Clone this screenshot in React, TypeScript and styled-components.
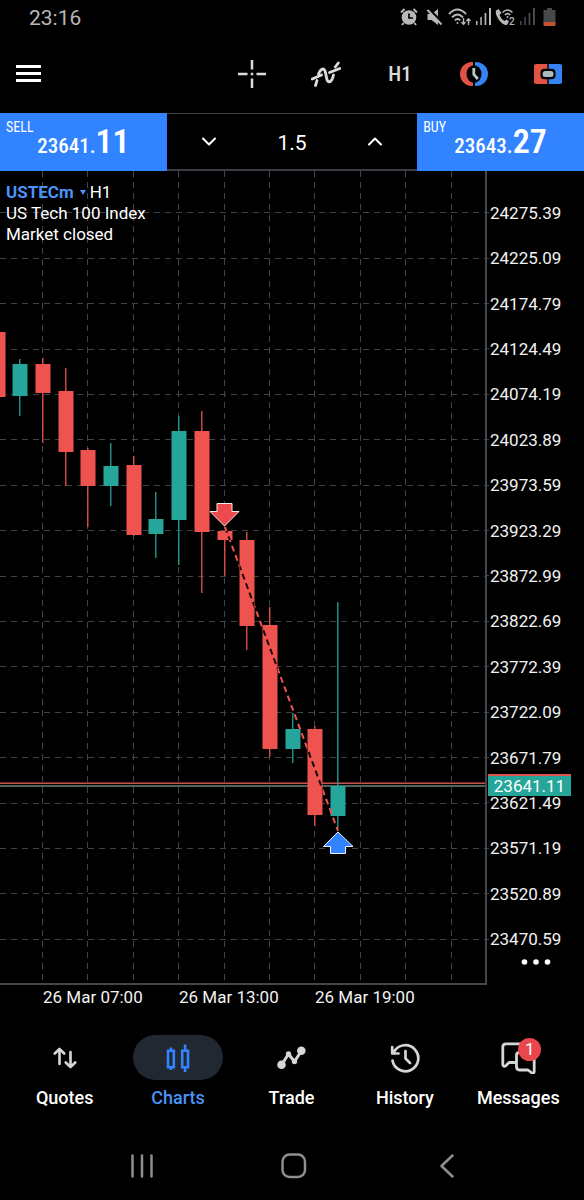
import React from "react";
import styled, { createGlobalStyle } from "styled-components";

const GlobalStyle = createGlobalStyle`
  *, *::before, *::after { box-sizing: border-box; }
  body { margin: 0; background: #000; color: #f2f2f2; font-family: Roboto, "Liberation Sans", sans-serif; }
  button, input { font: inherit; color: inherit; }
`;

const RED = "#ef5350";
const GREEN = "#26a69a";
const BLUE = "#3183ff";

const Screen = styled.div`
  display: flex;
  flex-direction: column;
  min-height: 100vh;
  background: #000;
`;

const PlainButton = styled.button`
  display: flex;
  align-items: center;
  justify-content: center;
  padding: 0;
  border: 0;
  background: none;
  cursor: pointer;
`;

/* Status bar */

const StatusBar = styled.header`
  display: flex;
  align-items: center;
  justify-content: space-between;
  height: 36px;
  padding: 0 27px 0 29px;
  color: #b8b8b8;
`;

const Clock = styled.time`
  font-size: 21px;
  line-height: 36px;
`;

const StatusIcons = styled.div`
  display: flex;
  align-items: center;
  gap: 4px;
  margin-bottom: 3px;
`;

/* Toolbar */

const Toolbar = styled.div`
  display: flex;
  align-items: center;
  justify-content: space-between;
  height: 77px;
  padding: 0 12px 2px 4px;
`;

const ToolGroup = styled.div`
  display: flex;
  gap: 26px;
`;

const ToolButton = styled(PlainButton)`
  width: 48px;
  height: 48px;
  color: #dcdcdc;
  font-family: "Roboto Condensed", Roboto, sans-serif;
  font-size: 21px;
  font-weight: 500;
`;

/* One click trading row */

const TradeRow = styled.section`
  display: grid;
  grid-template-columns: minmax(0, 2fr) minmax(0, 3fr) minmax(0, 2fr);
  height: 58px;
`;

const QuoteButton = styled.button`
  display: grid;
  align-content: start;
  padding: 0 6px;
  border: 0;
  background: ${BLUE};
  color: #fff;
  font-family: "Roboto Condensed", Roboto, sans-serif;
  cursor: pointer;
`;

const QuoteLabel = styled.span`
  grid-area: 1 / 1;
  place-self: start;
  padding-top: 5px;
  font-size: 14px;
  line-height: 18px;
`;

const QuotePrice = styled.span`
  grid-area: 1 / 1;
  place-self: start center;
  padding-top: 11px;
  font-size: 21px;
  line-height: 34px;
  font-weight: 500;
`;

const QuotePips = styled.strong`
  font-size: 34px;
  font-weight: 600;
`;

const VolumeBox = styled.div`
  display: flex;
  align-items: stretch;
  border-top: 1px solid #3a3c44;
  border-bottom: 2px solid #3a3c44;
`;

const StepButton = styled(PlainButton)`
  flex: 0 0 85px;
  color: #fff;
`;

const VolumeInput = styled.input`
  flex: 1;
  width: 0;
  min-width: 0;
  padding: 2px 0 0;
  border: 0;
  background: none;
  color: #fff;
  font-size: 21px;
  text-align: center;
`;

/* Chart */

const ChartPanel = styled.main`
  position: relative;
  display: flex;
  font-size: 17px;
`;

const Plot = styled.div`
  flex: 1;
  min-width: 0;
  height: 814px;
  border-right: 2px solid #46464a;
  border-bottom: 2px solid #46464a;
`;

const PlotSvg = styled.svg`
  display: block;
  width: 100%;
  height: 812px;
`;

const ChartInfo = styled.div`
  position: absolute;
  top: 11px;
  left: 6px;
  line-height: 21px;
  color: #fff;
`;

const SymbolRow = styled.div`
  display: flex;
  align-items: center;
  gap: 4px;
`;

const SymbolButton = styled(PlainButton)`
  gap: 6px;
  color: #4a94f8;
  font-weight: 700;
  line-height: 21px;
`;

const PriceAxis = styled.div`
  position: relative;
  display: flex;
  flex-direction: column;
  flex: 0 0 97px;
  height: 814px;
  padding: 19px 0 23px;
`;

const PriceTick = styled.div`
  display: flex;
  flex: 1;
  align-items: center;
  gap: 1px;

  &::before {
    content: "";
    width: 2px;
    height: 1px;
    background: #46464a;
  }
`;

const CurrentPrice = styled.div`
  position: absolute;
  top: 603px;
  left: 1px;
  width: 83px;
  height: 22px;
  border-top: 2px solid #e0524c;
  background: ${GREEN};
  color: #fff;
  line-height: 20px;
  text-align: center;
`;

const MoreButton = styled(PlainButton)`
  position: absolute;
  right: 30px;
  bottom: 13px;
  width: 36px;
  height: 20px;
  color: #fff;
`;

const TimeAxis = styled.div`
  display: flex;
  height: 24px;
  padding-left: 43px;
  font-size: 17px;
  line-height: 24px;
`;

const TimeLabel = styled.span`
  flex: 0 0 136px;
`;

/* Bottom tabs */

const Tabs = styled.nav`
  display: flex;
  padding: 26px 9px 0 8px;
`;

const Tab = styled.a<{ $active?: boolean }>`
  display: flex;
  flex: 1;
  flex-direction: column;
  align-items: center;
  gap: 7px;
  color: ${(p) => (p.$active ? "#4a94f8" : "#fff")};
  font-size: 18px;
  font-weight: 500;
  line-height: 22px;
  text-decoration: none;
`;

const TabIcon = styled.span<{ $active?: boolean }>`
  position: relative;
  display: flex;
  align-items: center;
  justify-content: center;
  width: 90px;
  height: 45px;
  border-radius: 23px;
  background: ${(p) => (p.$active ? "#222831" : "none")};
  color: ${(p) => (p.$active ? BLUE : "#d6d6d6")};
`;

const Badge = styled.span`
  position: absolute;
  top: 3px;
  right: 22px;
  width: 23px;
  height: 23px;
  border-radius: 50%;
  background: #e9474d;
  color: #fff;
  font-size: 17px;
  font-weight: 400;
  line-height: 23px;
  text-align: center;
`;

const SystemNav = styled.footer`
  display: flex;
  height: 68px;
  margin-top: auto;
  padding: 0 61px 0 66px;
`;

const SystemButton = styled(PlainButton)`
  flex: 1;
  color: #8f8f8f;
`;

const Line = styled.svg`
  display: block;
  flex: none;
  fill: none;
  stroke: currentColor;
  stroke-linecap: round;
  stroke-linejoin: round;
`;

/* Data, in chart pixels measured from the top of the plot */

type Candle = { x: number; high: number; top: number; bottom: number; low: number; up?: boolean };

const candles: Candle[] = [
  { x: -2, high: 161, top: 161, bottom: 226, low: 226 },
  { x: 20, high: 188, top: 193, bottom: 225, low: 245, up: true },
  { x: 43, high: 187, top: 193, bottom: 222, low: 272 },
  { x: 66, high: 197, top: 220, bottom: 281, low: 315 },
  { x: 88, high: 277, top: 279, bottom: 315, low: 356 },
  { x: 111, high: 272, top: 295, bottom: 315, low: 335, up: true },
  { x: 134, high: 285, top: 294, bottom: 364, low: 365 },
  { x: 156, high: 321, top: 348, bottom: 363, low: 387, up: true },
  { x: 179, high: 245, top: 260, bottom: 349, low: 394, up: true },
  { x: 202, high: 240, top: 260, bottom: 361, low: 422 },
  { x: 225, high: 360, top: 360, bottom: 369, low: 405 },
  { x: 247, high: 361, top: 369, bottom: 455, low: 479 },
  { x: 270, high: 436, top: 454, bottom: 578, low: 586 },
  { x: 293, high: 542, top: 558, bottom: 578, low: 592, up: true },
  { x: 315, high: 555, top: 558, bottom: 644, low: 655 },
  { x: 338, high: 431, top: 615, bottom: 645, low: 658, up: true },
];

const gridX = [43, 88, 134, 179, 225, 270, 315, 361, 406, 452];

const prices = [
  "24275.39", "24225.09", "24174.79", "24124.49", "24074.19", "24023.89",
  "23973.59", "23923.29", "23872.99", "23822.69", "23772.39", "23722.09",
  "23671.79", "23621.49", "23571.19", "23520.89", "23470.59",
];

const gridY = prices.map((_, i) => Math.round(41.4 + i * 45.4) + 0.5);

const times = ["26 Mar 07:00", "26 Mar 13:00", "26 Mar 19:00"];

const dealLine = { x1: 225, y1: 356, x2: 338, y2: 660, strokeWidth: 2, strokeDasharray: "6 4" };

function PriceChart() {
  return (
    <PlotSvg role="img" aria-label="USTECm hourly candles">
      <defs>
        <clipPath id="falling-bodies">
          {candles.filter((c) => !c.up).map((c) => (
            <rect key={c.x} x={c.x - 7.5} y={c.top} width={15} height={c.bottom - c.top} />
          ))}
        </clipPath>
      </defs>
      <g stroke="#434346" strokeDasharray="6 5">
        {gridX.map((x) => <line key={x} x1={x - 0.5} x2={x - 0.5} y1={0} y2={810} />)}
        {gridY.map((y) => <line key={y} x1={0} x2="100%" y1={y} y2={y} />)}
      </g>
      <line x1={0} x2="100%" y1={615} y2={615} stroke="#4c665e" strokeWidth={2} />
      <line x1={0} x2="100%" y1={612.25} y2={612.25} stroke="#c9534f" strokeWidth={1.5} />
      {candles.map((c) => (
        <g key={c.x} fill={c.up ? GREEN : RED}>
          <rect x={c.x - 1} y={c.high} width={1.5} height={c.low - c.high} opacity={0.85} />
          <rect x={c.x - 7.5} y={c.top} width={15} height={c.bottom - c.top} />
        </g>
      ))}
      <line {...dealLine} stroke={RED} />
      <line {...dealLine} stroke="#1a0606" clipPath="url(#falling-bodies)" />
      <path d="M217 332.500h15v8h7L224.500 355 210 340.500h7z" fill="#ec4a4c" stroke="#fbe6e0" />
      <path d="M330.500 682.500h15v-7h7.500L338 661l-14.500 14.500h7z" fill={BLUE} stroke="#eaf3ff" />
    </PlotSvg>
  );
}

function Signal({ dim }: { dim?: boolean }) {
  return (
    <svg width="15" height="17" viewBox="0 0 15 17" fill={dim ? "#4a4a4a" : "currentColor"} aria-hidden="true">
      <rect x="0" y="13" width="1.500" height="4" />
      <rect x="4.300" y="9" width="1.500" height="8" />
      <rect x="8.600" y="5" width="1.700" height="12" />
      <rect x="13" y="0" width="2" height="17" />
    </svg>
  );
}

function StatusGlyphs() {
  return (
    <StatusIcons aria-label="Device status">
      <svg width="22" height="18" viewBox="0 0 22 18" fill="currentColor" aria-hidden="true">
        <circle cx="9" cy="9.500" r="7.300" />
        <path d="M1 4.500 4.500 1M17 4.500 13.500 1M3.500 15 2 17M14.500 15l1.500 2" stroke="currentColor" strokeWidth="2" />
        <path d="M9 5.500V10h4" fill="none" stroke="#000" strokeWidth="1.700" />
      </svg>
      <svg width="18" height="18" viewBox="0 0 18 18" fill="currentColor" aria-hidden="true">
        <path d="M1.500 6h4L12 1v16l-6.500-5h-4z" />
        <path d="M1.500 0 17 15.500" stroke="#000" strokeWidth="3" />
        <path d="M1.500 2 15.500 16.500" stroke="currentColor" strokeWidth="2" />
      </svg>
      <svg width="24" height="18" viewBox="0 0 24 18" fill="none" stroke="currentColor" strokeWidth="1.900" aria-hidden="true">
        <path d="M1 6Q9.500-3 18 6M4 9.300q5.500-5.600 11 0M6.800 12.300q2.700-2.700 5.400 0" />
        <circle cx="9.500" cy="15" r="1" fill="currentColor" stroke="none" />
        <path d="M15.500 10v6M13.500 14l2 2.200 2-2.200M20.500 17v-6M18.500 13l2-2.200 2 2.200" strokeWidth="1.400" />
      </svg>
      <Signal />
      <svg width="21" height="18" viewBox="0 0 21 18" overflow="visible" aria-hidden="true">
        <path d="M1 2.500 3.500 1l3 4-2 2q1.500 4 5 6l2.200-1.500L14 13.500 12 17Q8 17.500 4 12T1 2.500Z" fill="currentColor" />
        <path d="M7.500 4.500q5-5 10 0M9.800 7q2.700-2.700 5.400 0" fill="none" stroke="currentColor" strokeWidth="1.600" />
        <circle cx="12.500" cy="9" r="1" fill="currentColor" />
        <text x="14" y="17" fontSize="10" fontWeight="500" fill="currentColor">2</text>
      </svg>
      <Signal dim />
      <svg width="18" height="18" viewBox="0 0 18 18" aria-hidden="true">
        <path d="M8 0h5v2h3.500v13H4.500V2H8z" fill="#484848" />
        <path d="M4.500 14h12v3a1 1 0 0 1-1 1h-10a1 1 0 0 1-1-1z" fill="#c4512f" />
      </svg>
    </StatusIcons>
  );
}

export default function App() {
  return (
    <>
      <GlobalStyle />
      <Screen>
        <StatusBar>
          <Clock>23:16</Clock>
          <StatusGlyphs />
        </StatusBar>

        <Toolbar>
          <ToolButton aria-label="Menu">
            <svg width="25" height="17" viewBox="0 0 25 17" fill="#fff">
              <path d="M0 0h25v3H0zM0 7h25v3H0zM0 14h25v3H0z" />
            </svg>
          </ToolButton>
          <ToolGroup>
            <ToolButton aria-label="Crosshair">
              <svg width="28" height="28" viewBox="0 0 28 28" fill="none" stroke="currentColor" strokeWidth="2.500">
                <path d="M14 0v9.500M14 18.500V28M0 14h9.500M18.500 14H28M12.750 14h2.500" />
              </svg>
            </ToolButton>
            <ToolButton aria-label="Indicators">
              <Line width="30" height="26" viewBox="0 0 30 26" strokeWidth="2.800">
                <path d="M4.500 24.500 6 19.500M1.200 18l9.300-4M7.500 13C9 8.500 12 6.500 13.800 9.500c1.700 3 .9 9 3.400 11 2.800 1.500 4.300-2.500 5.300-6.500M18.500 11.500 28.800 7.500M24.300 6l3-4" />
              </Line>
            </ToolButton>
            <ToolButton aria-label="Timeframe">H1</ToolButton>
            <ToolButton aria-label="Order type">
              <svg width="28" height="24" viewBox="0 0 28 24">
                <path d="M13 0h-1a12 12 0 0 0 0 24h1z" fill="#e05345" />
                <path d="M15 0h1a12 12 0 0 1 0 24h-1z" fill="#3584f2" />
                <ellipse cx="14" cy="12" rx="7.500" ry="8.800" fill="#000" />
                <path d="M13.800 6v6.300l4 4.700" fill="none" stroke="#b6cacd" strokeWidth="2.800" />
              </svg>
            </ToolButton>
            <ToolButton aria-label="One click trading">
              <svg width="28" height="20" viewBox="0 0 28 20">
                <path d="M13.300 0H2a2 2 0 0 0-2 2v16a2 2 0 0 0 2 2h11.300z" fill="#e05345" />
                <path d="M14.700 0H26a2 2 0 0 1 2 2v16a2 2 0 0 1-2 2H14.700z" fill="#3584f2" />
                <rect x="6.500" y="4.800" width="15" height="10.400" rx="4" fill="#000" />
                <rect x="8.700" y="7" width="10.800" height="6" rx="2.500" fill="#a9bdc1" />
              </svg>
            </ToolButton>
          </ToolGroup>
        </Toolbar>

        <TradeRow>
          <QuoteButton>
            <QuoteLabel>SELL</QuoteLabel>
            <QuotePrice>23641.<QuotePips>11</QuotePips></QuotePrice>
          </QuoteButton>
          <VolumeBox>
            <StepButton aria-label="Decrease volume">
              <Line width="14" height="9" viewBox="0 0 14 9" strokeWidth="2"><path d="M1 1.500 7 7.500l6-6" /></Line>
            </StepButton>
            <VolumeInput aria-label="Volume" defaultValue="1.5" />
            <StepButton aria-label="Increase volume">
              <Line width="14" height="9" viewBox="0 0 14 9" strokeWidth="2"><path d="M1 7.500 7 1.500l6 6" /></Line>
            </StepButton>
          </VolumeBox>
          <QuoteButton>
            <QuoteLabel>BUY</QuoteLabel>
            <QuotePrice>23643.<QuotePips>27</QuotePips></QuotePrice>
          </QuoteButton>
        </TradeRow>

        <ChartPanel>
          <Plot><PriceChart /></Plot>
          <ChartInfo>
            <SymbolRow>
              <SymbolButton>
                USTECm
                <svg width="6" height="5" viewBox="0 0 6 5" fill="currentColor"><path d="M0 0h6L3 5z" /></svg>
              </SymbolButton>
              <span>H1</span>
            </SymbolRow>
            <div>US Tech 100 Index</div>
            <div>Market closed</div>
          </ChartInfo>
          <PriceAxis>
            {prices.map((p) => <PriceTick key={p}>{p}</PriceTick>)}
            <CurrentPrice>23641.11</CurrentPrice>
            <MoreButton aria-label="More">
              <svg width="30" height="6" viewBox="0 0 30 6" fill="currentColor">
                <circle cx="3.500" cy="3" r="2.800" /><circle cx="15" cy="3" r="2.800" /><circle cx="26.500" cy="3" r="2.800" />
              </svg>
            </MoreButton>
          </PriceAxis>
        </ChartPanel>
        <TimeAxis>
          {times.map((t) => <TimeLabel key={t}>{t}</TimeLabel>)}
        </TimeAxis>

        <Tabs>
          <Tab href="#quotes">
            <TabIcon>
              <Line width="24" height="22" viewBox="0 0 24 22" strokeWidth="2.600">
                <path d="M6.500 17V2M1.800 6.500 6.500 1.800l4.700 4.700M17.500 5v15M12.800 15.500l4.700 4.700 4.700-4.700" />
              </Line>
            </TabIcon>
            Quotes
          </Tab>
          <Tab href="#charts" $active aria-current="page">
            <TabIcon $active>
              <svg width="24" height="28" viewBox="0 0 24 28" fill="none" stroke="currentColor" strokeWidth="2.600">
                <path d="M2 6.800h5.800v16.400H2zM4.900 3.500v3M4.900 23.500v2.500M16.200 6.800H22v16.400h-5.800zM19.100.5v6M19.100 23.500v4.500" />
              </svg>
            </TabIcon>
            Charts
          </Tab>
          <Tab href="#trade">
            <TabIcon>
              <Line width="29" height="24" viewBox="0 0 29 24" strokeWidth="3">
                <path d="M4.500 19 11.500 8l6 7.500L24.500 4.800" />
                <g fill="currentColor" stroke="none">
                  <circle cx="4.500" cy="18.800" r="4.300" /><circle cx="11.500" cy="8" r="2.700" />
                  <circle cx="17.500" cy="15.500" r="2.700" /><circle cx="24.300" cy="4.800" r="4.300" />
                </g>
              </Line>
            </TabIcon>
            Trade
          </Tab>
          <Tab href="#history">
            <TabIcon>
              <Line width="30" height="30" viewBox="0 0 30 30" strokeWidth="2.700">
                <path d="M2.500 17.500A13 13 0 1 0 4.300 8.300M2.200 4v6.500h6.300M15.500 8v7.500l4.500 4.500" />
              </Line>
            </TabIcon>
            History
          </Tab>
          <Tab href="#messages">
            <TabIcon>
              <Line width="35" height="32" viewBox="0 0 35 32" strokeWidth="2.800">
                <path d="M13.500 20.500H8L4.500 24Q1.800 25 1.800 22V5q0-3.200 3.200-3.200H27M15.500 14v10.500q0 3.500 3 3.500h8.500L31 31q2.200.500 2.200-1.800V14M15.500 16v-3q0-2.500 3-2.500" />
              </Line>
              <Badge>1</Badge>
            </TabIcon>
            Messages
          </Tab>
        </Tabs>

        <SystemNav>
          <SystemButton aria-label="Recent apps">
            <Line width="24" height="24" viewBox="0 0 24 24" strokeWidth="2.500"><path d="M2.500 1.500v21M12 1.500v21M21.500 1.500v21" /></Line>
          </SystemButton>
          <SystemButton aria-label="Home">
            <Line width="26" height="26" viewBox="0 0 26 26" strokeWidth="2.500"><rect x="1.500" y="1.500" width="22.500" height="22.500" rx="7" /></Line>
          </SystemButton>
          <SystemButton aria-label="Back">
            <Line width="14" height="24" viewBox="0 0 14 24" strokeWidth="2.500"><path d="M12.500 1.500 1.500 12l11 10.500" /></Line>
          </SystemButton>
        </SystemNav>
      </Screen>
    </>
  );
}
